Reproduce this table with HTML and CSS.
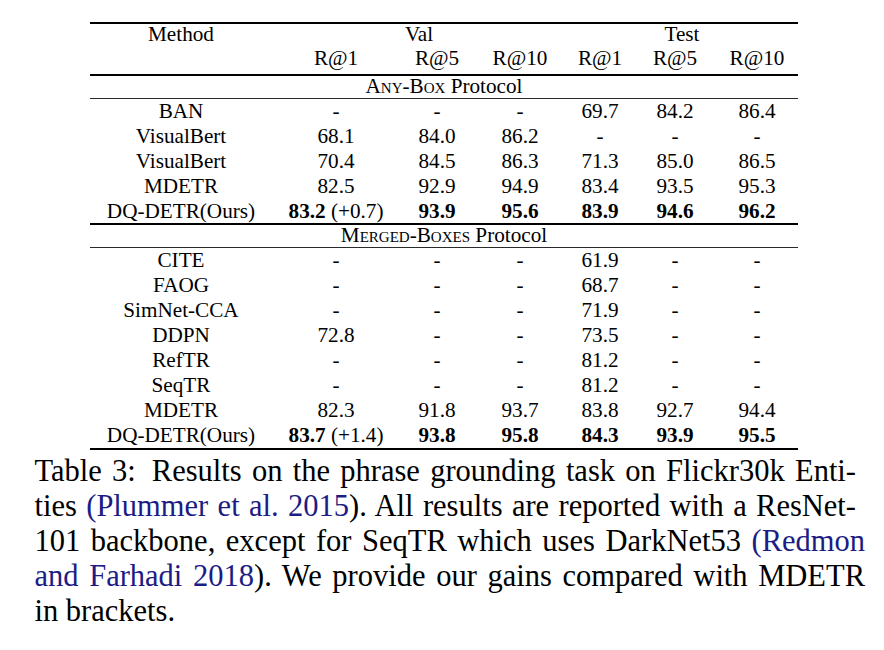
FILE: index.html
```html
<!DOCTYPE html>
<html lang="en">
<head>
<meta charset="utf-8">
<title>Table 3</title>
<link rel="stylesheet" href="styles.css">
</head>
<body>
<div class="page">
  <div class="tbl">
    <div class="rule thick"></div>
    <div class="row hdr1">
      <div class="c">Method</div>
      <div class="c val">Val</div>
      <div class="c test">Test</div>
    </div>
    <div class="row hdr2">
      <div class="c"></div>
      <div class="c">R@1</div><div class="c">R@5</div><div class="c">R@10</div>
      <div class="c">R@1</div><div class="c">R@5</div><div class="c">R@10</div>
    </div>
    <div class="rule thick"></div>
    <div class="row proto"><div class="c all"><span class="sc">Any-Box</span> Protocol</div></div>
    <div class="rule thin"></div>
    <div class="row body"><div class="c">BAN</div><div class="c">-</div><div class="c">-</div><div class="c">-</div><div class="c">69.7</div><div class="c">84.2</div><div class="c">86.4</div></div>
    <div class="row body"><div class="c">VisualBert</div><div class="c">68.1</div><div class="c">84.0</div><div class="c">86.2</div><div class="c">-</div><div class="c">-</div><div class="c">-</div></div>
    <div class="row body"><div class="c">VisualBert</div><div class="c">70.4</div><div class="c">84.5</div><div class="c">86.3</div><div class="c">71.3</div><div class="c">85.0</div><div class="c">86.5</div></div>
    <div class="row body"><div class="c">MDETR</div><div class="c">82.5</div><div class="c">92.9</div><div class="c">94.9</div><div class="c">83.4</div><div class="c">93.5</div><div class="c">95.3</div></div>
    <div class="row body"><div class="c">DQ-DETR(Ours)</div><div class="c"><b>83.2</b> (+0.7)</div><div class="c"><b>93.9</b></div><div class="c"><b>95.6</b></div><div class="c"><b>83.9</b></div><div class="c"><b>94.6</b></div><div class="c"><b>96.2</b></div></div>
    <div class="rule thick"></div>
    <div class="row proto"><div class="c all"><span class="sc">Merged-Boxes</span> Protocol</div></div>
    <div class="rule thin"></div>
    <div class="row body"><div class="c">CITE</div><div class="c">-</div><div class="c">-</div><div class="c">-</div><div class="c">61.9</div><div class="c">-</div><div class="c">-</div></div>
    <div class="row body"><div class="c">FAOG</div><div class="c">-</div><div class="c">-</div><div class="c">-</div><div class="c">68.7</div><div class="c">-</div><div class="c">-</div></div>
    <div class="row body"><div class="c">SimNet-CCA</div><div class="c">-</div><div class="c">-</div><div class="c">-</div><div class="c">71.9</div><div class="c">-</div><div class="c">-</div></div>
    <div class="row body"><div class="c">DDPN</div><div class="c">72.8</div><div class="c">-</div><div class="c">-</div><div class="c">73.5</div><div class="c">-</div><div class="c">-</div></div>
    <div class="row body"><div class="c">RefTR</div><div class="c">-</div><div class="c">-</div><div class="c">-</div><div class="c">81.2</div><div class="c">-</div><div class="c">-</div></div>
    <div class="row body"><div class="c">SeqTR</div><div class="c">-</div><div class="c">-</div><div class="c">-</div><div class="c">81.2</div><div class="c">-</div><div class="c">-</div></div>
    <div class="row body"><div class="c">MDETR</div><div class="c">82.3</div><div class="c">91.8</div><div class="c">93.7</div><div class="c">83.8</div><div class="c">92.7</div><div class="c">94.4</div></div>
    <div class="row body"><div class="c">DQ-DETR(Ours)</div><div class="c"><b>83.7</b> (+1.4)</div><div class="c"><b>93.8</b></div><div class="c"><b>95.8</b></div><div class="c"><b>84.3</b></div><div class="c"><b>93.9</b></div><div class="c"><b>95.5</b></div></div>
    <div class="rule thick"></div>
  </div>
  <div class="caption">
    <div class="ln hy">Table 3:<span class="sep"></span>Results on the phrase grounding task on Flickr30k Enti-</div>
    <div class="ln hy">ties <span class="cite">(Plummer et al. 2015</span>). All results are reported with a ResNet-</div>
    <div class="ln">101 backbone, except for SeqTR which uses DarkNet53 <span class="cite">(Redmon</span></div>
    <div class="ln"><span class="cite">and Farhadi 2018</span>). We provide our gains compared with MDETR</div>
    <div class="ln last">in brackets.</div>
  </div>
</div>
</body>
</html>
```
FILE: styles.css
```css
html, body {
  margin: 0;
  padding: 0;
  background: #ffffff;
}

.page {
  padding-top: 22px;
  font-family: "Liberation Serif", "Times New Roman", serif;
  color: #000000;
}

.tbl {
  margin-left: 90px;
  width: 708px;
  font-size: 21.2px;
}

.rule {
  background: #000000;
}

.rule.thick {
  height: 2px;
}

.rule.thin {
  height: 1px;
  background: #2a2a2a;
}

.row {
  display: grid;
  grid-template-columns: 182px 128px 74px 92px 68px 82px 82px;
}

.c {
  text-align: center;
  white-space: nowrap;
}

.c b {
  font-weight: bold;
}

.val {
  grid-column: 2 / 5;
}

.test {
  grid-column: 5 / 8;
}

.all {
  grid-column: 1 / 8;
}

.hdr1 {
  height: 24px;
  line-height: 21px;
}

.hdr2 {
  height: 26px;
  line-height: 21px;
}

.proto {
  height: 22px;
  line-height: 20px;
}

.sc {
  font-variant: small-caps;
}

.body {
  height: 24.9px;
  line-height: 24px;
}

.caption {
  margin-top: 4px;
  margin-left: 34.5px;
  width: 830.5px;
  font-size: 30.5px;
  line-height: 35.2px;
}

.ln {
  text-align: justify;
  text-align-last: justify;
  white-space: nowrap;
}

.ln.hy {
  margin-right: 9px;
}

.ln.last {
  text-align-last: left;
}

.sep {
  display: inline-block;
  width: 16px;
}

.cite {
  color: #1c1c84;
}
```
